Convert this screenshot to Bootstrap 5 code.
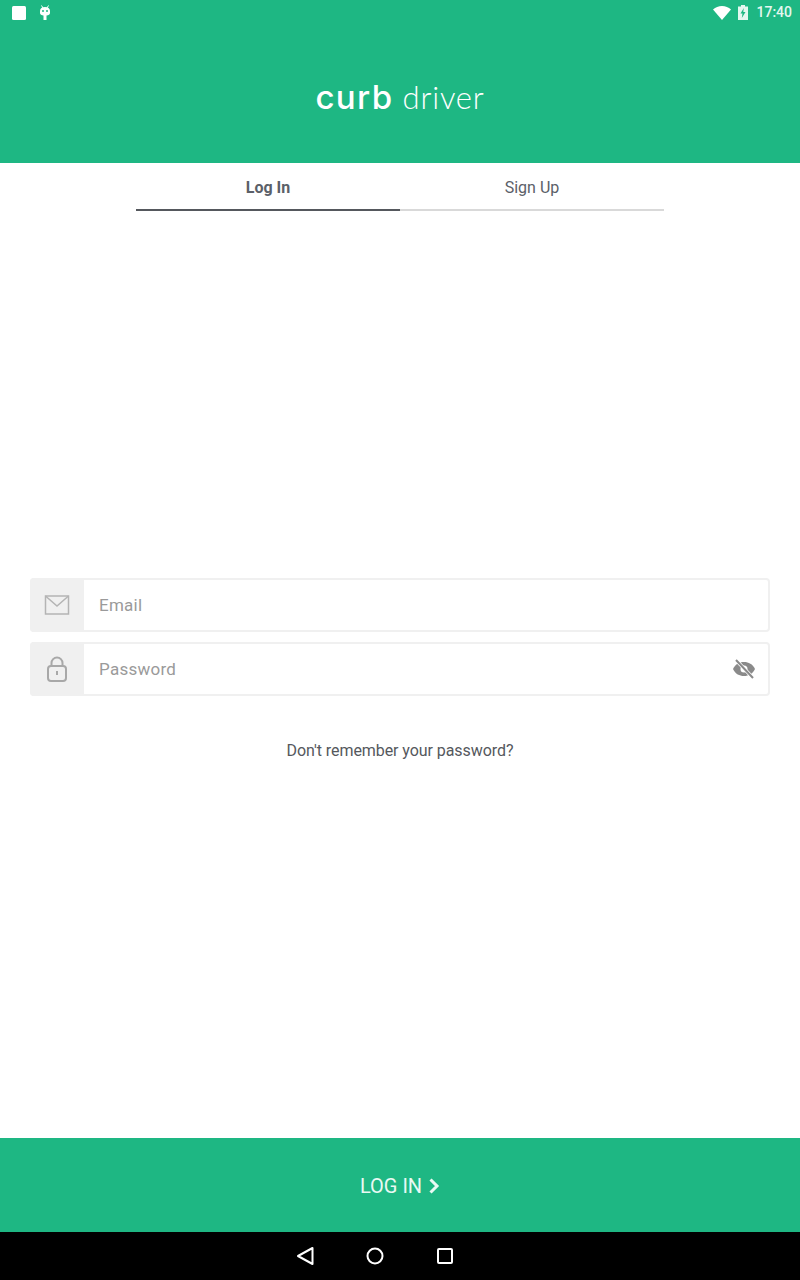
<!DOCTYPE html>
<html lang="en">
<head>
    <meta charset="UTF-8">
    <meta name="viewport" content="width=device-width, initial-scale=1.0">
    <title>Curb Driver</title>
    <link href="https://cdn.jsdelivr.net/npm/bootstrap@5.3.0/dist/css/bootstrap.min.css" rel="stylesheet">
    <style>
        body {
            font-family: Roboto, "Liberation Sans", sans-serif;
            background-color: #fff;
        }
        .app-screen {
            height: 1280px;
        }
        .brand-header {
            background-color: #1eb783;
            height: 163px;
        }
        .status-row {
            height: 25px;
            padding: 0 8px 0 12px;
            color: #fff;
        }
        .status-android {
            margin-left: 13px;
        }
        .status-battery {
            margin-left: 7px;
        }
        .status-time {
            font-size: 14px;
            font-weight: 500;
            color: #e4f7f0;
        }
        .brand-logo {
            height: 138px;
            padding-top: 7px;
            color: #fff;
            line-height: 1;
        }
        .logo-curb {
            font-family: Inter, sans-serif;
            font-size: 33px;
            font-weight: 500;
            letter-spacing: 1.4px;
        }
        .logo-driver {
            font-family: Lato, sans-serif;
            font-size: 31px;
            font-weight: 300;
            margin-left: 9px;
            letter-spacing: 0.8px;
        }
        .tab-strip {
            width: 528px;
        }
        .tab-item {
            width: 264px;
            height: 48px;
            padding-top: 15px;
            font-size: 16px;
            line-height: 20px;
            text-align: center;
            color: #5b6068;
            border-bottom: 2px solid #d9d9d9;
        }
        .tab-item.on {
            font-weight: 700;
            border-bottom-color: #55585d;
        }
        .login-form {
            padding: 367px 30px 0;
        }
        .field-box {
            height: 54px;
            border: 2px solid #f0f0f0;
            border-radius: 4px;
            margin-bottom: 10px;
            background-color: #fff;
        }
        .field-icon {
            width: 54px;
            margin: -2px 0 -2px -2px;
            background-color: #f0f0f0;
            border-radius: 4px 0 0 4px;
        }
        .field-box .form-control {
            border: 0;
            box-shadow: none;
            height: 50px;
            padding: 0 0 0 15px;
            font-size: 17px;
            letter-spacing: 0.25px;
            color: #555;
            background: transparent;
        }
        .field-box .form-control::placeholder {
            color: #9a9a9a;
            opacity: 1;
        }
        .eye-toggle {
            margin-right: 12px;
        }
        .forgot-link {
            margin-top: 45px;
            font-size: 16px;
            line-height: 20px;
            letter-spacing: -0.07px;
            color: #55585d;
            text-decoration: none;
            text-align: center;
            display: block;
        }
        .login-bar {
            height: 94px;
            padding-top: 8px;
            background-color: #1eb783;
            border: 0;
            border-radius: 0;
            color: #e9f9f3;
            font-size: 20px;
        }
        .login-bar:hover {
            background-color: #1eb783;
            color: #e9f9f3;
        }
        .login-chevron {
            margin-left: 7px;
        }
        .system-nav {
            height: 48px;
            padding-right: 50px;
            background-color: #000;
        }
    </style>
</head>
<body>
    <div class="app-screen d-flex flex-column">
        <header class="brand-header">
            <div class="status-row d-flex align-items-center">
                <svg width="14" height="14" viewBox="0 0 14 14"><rect width="14" height="14" rx="1.5" fill="#fff"/></svg>
                <svg width="12" height="16" viewBox="0 0 12 16" class="status-android"><path d="M2.500 0.500L4 3M9.500 0.500L8 3" stroke="#fff" fill="none"/><path d="M1 6C1 3.500 3 2 6 2s5 1.500 5 4v2c0 1.500-1.500 2.500-3.500 2.500V15h-3v-4.500C2.500 10.500 1 9.500 1 8z" fill="#fff"/><circle cx="4" cy="6" r="1" fill="#1eb783"/><circle cx="8" cy="6" r="1" fill="#1eb783"/></svg>
                <div class="ms-auto d-flex align-items-center">
                    <svg width="18" height="14" viewBox="0 0 18 14"><path d="M0 3.500C2.500 1.300 5.500 0 9 0s6.500 1.300 9 3.500L9 14z" fill="#fff"/></svg>
                    <svg width="10" height="15" viewBox="0 0 10 15" class="status-battery"><path d="M3 0h4v1.500h3V15H0V1.500h3z" fill="#e4f7f0"/><path d="M5.800 3L2.500 8.500h2L3.800 13l3.700-6h-2.200z" fill="#1eb783"/></svg>
                    <span class="status-time ms-2">17:40</span>
                </div>
            </div>
            <div class="brand-logo d-flex align-items-center justify-content-center">
                <span class="logo-curb">curb</span><span class="logo-driver">driver</span>
            </div>
        </header>

        <main class="flex-grow-1">
            <div class="tab-strip d-flex mx-auto">
                <div class="tab-item on">Log In</div>
                <div class="tab-item">Sign Up</div>
            </div>

            <form class="login-form">
                <div class="field-box d-flex">
                    <div class="field-icon d-flex flex-shrink-0 align-items-center justify-content-center">
                        <svg width="26" height="22" viewBox="0 0 26 22" fill="none" stroke="#b4b4b4" stroke-width="1.500"><rect x="1.500" y="2" width="23" height="18"/><path d="M1.500 2L13 12 24.500 2"/></svg>
                    </div>
                    <input type="email" class="form-control" placeholder="Email">
                </div>
                <div class="field-box d-flex align-items-center">
                    <div class="field-icon d-flex flex-shrink-0 align-items-center justify-content-center align-self-stretch">
                        <svg width="22" height="26" viewBox="0 0 22 26" fill="none" stroke="#a8a8a8" stroke-width="2"><rect x="2" y="10" width="18" height="15" rx="3"/><path d="M5.500 10V7a5.500 5.500 0 0 1 11 0v3"/><path d="M11 15v4"/></svg>
                    </div>
                    <input type="password" class="form-control" placeholder="Password">
                    <svg class="eye-toggle flex-shrink-0" width="24" height="20" viewBox="0 0 24 20"><path d="M1 10C3.500 5 7.300 3 12 3s8.500 2 11 7c-2.500 5-6.300 7-11 7S3.500 15 1 10z" fill="#8a8a8a"/><circle cx="12" cy="10" r="3.500" fill="#fff"/><path d="M4 1l17 18" stroke="#fff" stroke-width="3.500"/><path d="M4 1l17 18" stroke="#8a8a8a" stroke-width="2"/></svg>
                </div>
                <a href="#" class="forgot-link">Don't remember your password?</a>
            </form>
        </main>

        <button type="button" class="btn login-bar w-100 d-flex align-items-center justify-content-center">
            LOG IN
            <svg width="11" height="16" viewBox="0 0 11 16" fill="none" stroke="#e9f9f3" stroke-width="3" class="login-chevron"><path d="M1.500 1.500L8 8 1.500 14.500"/></svg>
        </button>

        <nav class="system-nav d-flex align-items-center justify-content-center">
            <svg width="190" height="48" viewBox="0 0 190 48" fill="none" stroke="#fff" stroke-width="2">
                <path d="M18 24L32.500 16v16z" stroke-linejoin="round"/>
                <circle cx="95" cy="24" r="7.500"/>
                <rect x="158" y="17" width="14" height="14" rx="1"/>
            </svg>
        </nav>
    </div>
    <script src="https://cdn.jsdelivr.net/npm/bootstrap@5.3.0/dist/js/bootstrap.bundle.min.js"></script>
</body>
</html>
